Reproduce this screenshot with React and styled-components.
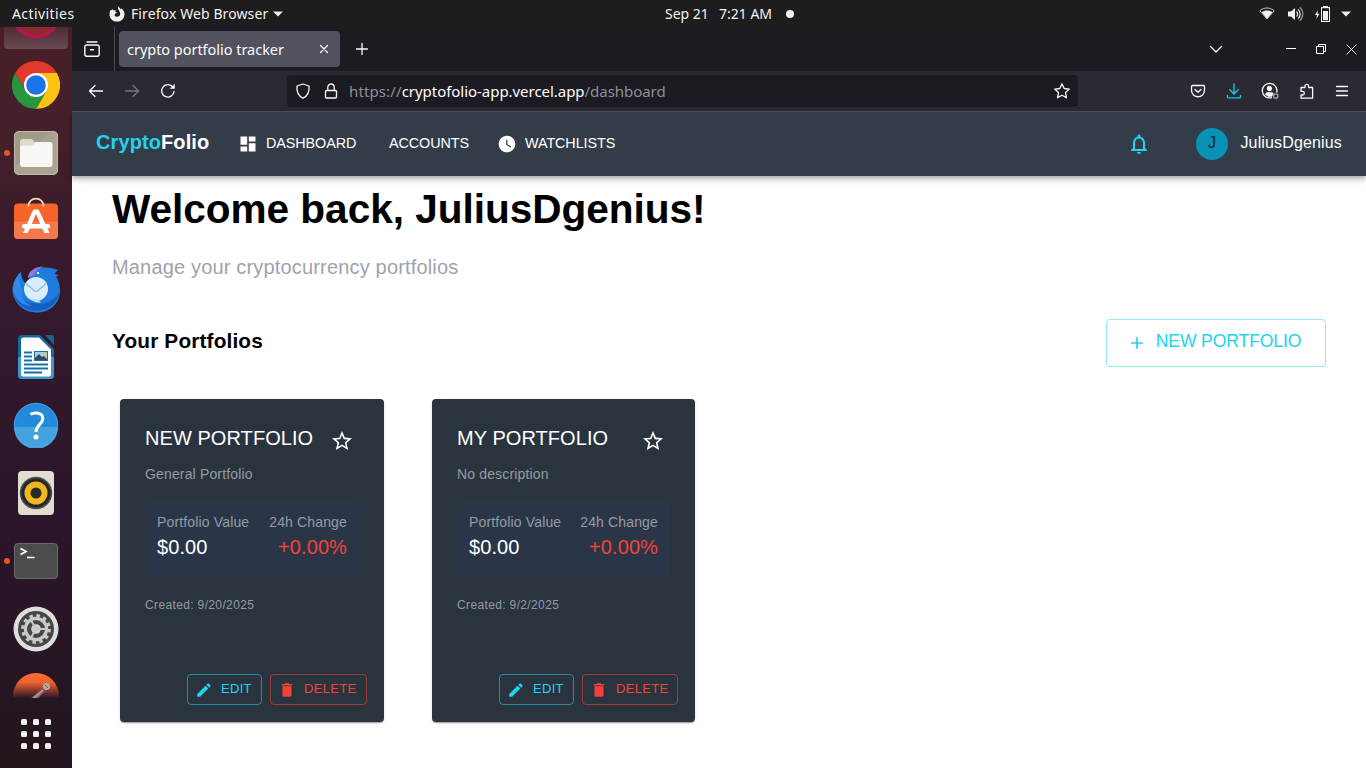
import React from "react";
import styled, { createGlobalStyle } from "styled-components";

const GlobalStyle = createGlobalStyle`
  * { box-sizing: border-box; }
  html, body { margin: 0; padding: 0; }
  body {
    width: 1366px;
    height: 768px;
    overflow: hidden;
    background: #fff;
    font-family: "Liberation Sans", Arial, sans-serif;
  }
  svg { display: block; flex: none; }
`;

const UI_FONT = `"Noto Sans", "Open Sans", sans-serif`;

/* ---------- desktop ---------- */

const Desktop = styled.div`
  display: flex;
  flex-direction: column;
  width: 1366px;
  height: 768px;
  overflow: hidden;
`;

const TopBar = styled.header`
  display: grid;
  grid-template-columns: 653px 1fr auto;
  align-items: center;
  flex: none;
  height: 27px;
  padding: 0 15px 0 12px;
  background: #1d1d1d;
  color: #f2f2f2;
  font: 14px/26px ${UI_FONT};
  white-space: pre;
`;

const TopGroup = styled.div`
  display: flex;
  align-items: center;
  height: 27px;
`;

const Activities = styled.span`
  width: 97px;
  letter-spacing: 0.42px;
`;

const AppName = styled.span`
  margin: 0 5px 0 6px;
  letter-spacing: 0.1px;
`;

const ClockPart = styled.span`
  width: ${(p) => p.$w}px;
`;

const Dot = styled.i`
  width: 8px;
  height: 8px;
  border-radius: 50%;
  background: #f2f2f2;
`;

const StatusIcons = styled.div`
  display: flex;
  align-items: center;
  gap: 11px;
  svg:first-child { margin-right: 2px; }
`;

const Workspace = styled.div`
  display: flex;
  flex: 1;
  min-height: 0;
`;

/* ---------- dock ---------- */

const Dock = styled.aside`
  display: flex;
  flex-direction: column;
  align-items: center;
  flex: none;
  width: 72px;
  background: linear-gradient(180deg, #491f26 0%, #43202a 16%, #3a1a2b 28%, #32182d 45%, #2a152a 70%, #261622 88%, #22151d 100%);
`;

const DockPartial = styled.div`
  display: flex;
  justify-content: center;
  width: 64px;
  height: 22px;
  margin: 0 0 2px;
  overflow: hidden;
  border-radius: 0 0 4px 4px;
  background: linear-gradient(180deg, #4c2b31, #6b4b54);
`;

const DockCell = styled.div`
  display: grid;
  grid-template-columns: 14px 44px 14px;
  align-items: center;
  justify-items: center;
  flex: none;
  width: 72px;
  height: 68px;
`;

const RunDot = styled.i`
  width: 6px;
  height: 6px;
  border-radius: 50%;
  background: ${(p) => (p.$on ? "#e95420" : "transparent")};
`;

const DockClip = styled.div`
  display: flex;
  justify-content: center;
  flex: none;
  height: 35px;
  padding-top: 10px;
  overflow: hidden;
`;

const AppsGrid = styled.div`
  display: grid;
  grid-template-columns: repeat(3, 6px);
  gap: 6px;
  margin-top: 21px;
  i { height: 6px; border-radius: 1.5px; background: #f3efee; }
`;

/* ---------- browser ---------- */

const Browser = styled.section`
  display: flex;
  flex-direction: column;
  flex: 1;
  min-width: 0;
`;

const TabStrip = styled.div`
  display: flex;
  align-items: center;
  flex: none;
  height: 44px;
  padding: 0 9px 0 10px;
  background: #1c1b22;
`;

const ViewButton = styled.div`
  display: flex;
  align-items: center;
  width: 33px;
  height: 44px;
  border-right: 1px solid #4c4b54;
`;

const Tab = styled.div`
  display: flex;
  align-items: center;
  justify-content: space-between;
  width: 221px;
  height: 36px;
  margin: 0 14px 0 4px;
  padding: 0 11px 0 8px;
  border-radius: 4px;
  background: #52525e;
  color: #fbfbfe;
  font: 14.5px/20px ${UI_FONT};
  white-space: nowrap;
`;

const TabTitle = styled.span`
  padding-bottom: 1px;
  letter-spacing: -0.03px;
`;

const WindowControls = styled.div`
  display: flex;
  align-items: center;
  margin-left: auto;
`;

const Gap = styled.span`
  width: ${(p) => p.$w}px;
`;

const Toolbar = styled.div`
  display: flex;
  align-items: center;
  flex: none;
  height: 41px;
  padding: 0 16px 0 16px;
  border-bottom: 1px solid #55545f;
  background: #2b2a33;
`;

const HistoryButtons = styled.div`
  display: flex;
  gap: 20px;
  width: 199px;
`;

const UrlField = styled.div`
  display: flex;
  align-items: center;
  width: 791px;
  height: 32px;
  padding: 0 8px;
  border-radius: 4px;
  background: #1c1b22;
  color: #8f8f98;
  font: 15px/20px ${UI_FONT};
`;

const UrlText = styled.span`
  flex: 1;
  margin-left: 10px;
  padding-bottom: 1px;
  white-space: nowrap;
  letter-spacing: -0.04px;
  b { color: #fbfbfe; font-weight: 400; }
`;

const UrlScheme = styled.span`
  letter-spacing: 0.12px;
`;

const ToolbarActions = styled.div`
  display: flex;
  align-items: center;
  gap: 19.5px;
  margin-left: auto;
`;

/* ---------- web app ---------- */

const NavBar = styled.nav`
  display: flex;
  align-items: center;
  flex: none;
  height: 64px;
  padding: 0 24px;
  background: #333d49;
  color: #fff;
  position: relative;
  box-shadow: 0 2px 4px -1px rgba(0, 0, 0, 0.2), 0 4px 5px rgba(0, 0, 0, 0.14), 0 1px 10px rgba(0, 0, 0, 0.12);
`;

const Brand = styled.span`
  width: 142px;
  padding-bottom: 4px;
  font-size: 20px;
  line-height: 30px;
  font-weight: 700;
  letter-spacing: 0.1px;
  color: #fff;
  em { font-style: normal; color: #22d3ee; }
`;

const NavLink = styled.a`
  display: flex;
  align-items: center;
  gap: 8px;
  width: ${(p) => p.$w}px;
  font-size: 14.4px;
  line-height: 20px;
  letter-spacing: -0.1px;
  white-space: nowrap;
  span { padding-bottom: 2px; }
`;

const Account = styled.div`
  display: flex;
  align-items: center;
  margin-left: auto;
`;

const Avatar = styled.span`
  width: 32px;
  height: 32px;
  margin: 0 12px 0 45px;
  padding-right: 1px;
  border-radius: 50%;
  background: #0891b2;
  color: #10252f;
  font-size: 16px;
  line-height: 30px;
  text-align: center;
`;

const UserName = styled.span`
  padding-bottom: 3px;
  font-size: 16px;
  line-height: 24px;
  letter-spacing: 0.15px;
`;

const Page = styled.main`
  flex: 1;
  min-height: 0;
  padding: 8px 40px 0;
  background: #fff;
  color: #000;
`;

const Heading = styled.h1`
  margin: 0;
  font-size: 40.6px;
  line-height: 50px;
  letter-spacing: -0.04px;
  white-space: nowrap;
`;

const Lead = styled.p`
  margin: 19px 0 0;
  font-size: 20px;
  line-height: 28px;
  letter-spacing: 0.17px;
  color: #9ca3af;
`;

const SectionBar = styled.div`
  display: flex;
  align-items: center;
  justify-content: space-between;
  height: 48px;
  margin-top: 38px;
`;

const SectionTitle = styled.h2`
  margin: 0;
  padding-bottom: 4px;
  font-size: 20.8px;
  line-height: 28px;
  letter-spacing: 0.15px;
`;

const CreateButton = styled.button`
  display: flex;
  align-items: center;
  justify-content: center;
  gap: 9px;
  width: 220px;
  height: 48px;
  padding: 0 4px 0 0;
  border: 1px solid rgba(34, 211, 238, 0.5);
  border-radius: 4px;
  background: transparent;
  color: #22d3ee;
  font: 17.6px/24px "Liberation Sans", Arial, sans-serif;
  letter-spacing: -0.13px;
  white-space: nowrap;
  span { padding-bottom: 4px; }
`;

const Cards = styled.div`
  display: flex;
  gap: 48px;
  margin: 32px 0 0 8px;
`;

const Card = styled.article`
  display: flex;
  flex-direction: column;
  width: ${(p) => p.$w}px;
  height: 323px;
  padding: 24px 17px 17px 25px;
  border-radius: 4px;
  background: #2a343f;
  box-shadow: 0 2px 1px -1px rgba(0, 0, 0, 0.2), 0 1px 1px rgba(0, 0, 0, 0.14), 0 1px 3px rgba(0, 0, 0, 0.12);
  color: #fff;
`;

const CardHead = styled.div`
  display: flex;
  justify-content: space-between;
  height: 41px;
  padding-right: 13px;
`;

const CardTitle = styled.h3`
  margin: 0;
  font-size: 20px;
  font-weight: 400;
  line-height: 30px;
  letter-spacing: 0.06px;
  white-space: nowrap;
`;

const StarSlot = styled.span`
  padding-top: 6px;
`;

const Muted = styled.p`
  margin: 0;
  font-size: ${(p) => p.$size || 14}px;
  line-height: 20px;
  letter-spacing: ${(p) => p.$track || 0.15}px;
  white-space: nowrap;
  color: #949ba5;
`;

const Stats = styled.div`
  display: flex;
  justify-content: space-between;
  height: 75px;
  margin: 18px 8px 18px 0;
  padding: 10px 12px;
  border-radius: 4px;
  background: #2a3647;
`;

const Stat = styled.div`
  text-align: ${(p) => p.$align || "left"};
`;

const StatValue = styled.div`
  font-size: 20px;
  line-height: 30px;
  letter-spacing: 0.1px;
  color: ${(p) => (p.$down ? "#f44336" : "#fff")};
`;

const CardActions = styled.div`
  display: flex;
  justify-content: flex-end;
  gap: 8px;
  margin-top: auto;
`;

const ActionButton = styled.button`
  display: flex;
  align-items: center;
  gap: 8px;
  width: ${(p) => p.$w}px;
  height: 31px;
  padding: 1px 0 0 7px;
  border: 1px solid ${(p) => (p.$danger ? "rgba(244,67,54,.55)" : "rgba(34,211,238,.55)")};
  border-radius: 4px;
  background: transparent;
  color: ${(p) => (p.$danger ? "#f44336" : "#22d3ee")};
  font: 13px/18px "Liberation Sans", Arial, sans-serif;
  letter-spacing: 0.3px;
  span { padding-bottom: 3px; }
`;

/* ---------- icons ---------- */

const Solid = ({ d, size = 24 }) => (
  <svg width={size} height={size} viewBox="0 0 24 24" fill="currentColor"><path d={d} /></svg>
);

const Line = ({ children, size = 16, color = "#fbfbfe", w = 1.3, box = 16 }) => (
  <svg width={size} height={size} viewBox={`0 0 ${box} ${box}`} fill="none" stroke={color} strokeWidth={w} strokeLinecap="round" strokeLinejoin="round">
    {children}
  </svg>
);

const PATHS = {
  dashboard: "M3 13h8V3H3v10zm0 8h8v-6H3v6zm10 0h8V11h-8v10zm0-18v6h8V3h-8z",
  watch: "M12 2C6.5 2 2 6.5 2 12s4.5 10 10 10 10-4.5 10-10S17.5 2 12 2zm4.2 14.2L11 13V7h1.5v5.2l4.5 2.7-.8 1.3z",
  bell: "M12 22c1.1 0 2-.9 2-2h-4c0 1.1.9 2 2 2zm6-6v-5c0-3.07-1.63-5.64-4.5-6.32V4c0-.83-.67-1.5-1.5-1.5s-1.5.67-1.5 1.5v.68C7.64 5.36 6 7.92 6 11v5l-2 2v1h16v-1l-2-2zm-2 1H8v-6c0-2.48 1.51-4.5 4-4.5s4 2.02 4 4.5v6z",
  star: "M22 9.24l-7.19-.62L12 2 9.19 8.63 2 9.24l5.46 4.73L5.82 21 12 17.27 18.18 21l-1.63-7.03L22 9.24zM12 15.4l-3.76 2.27 1-4.28-3.32-2.88 4.38-.38L12 6.1l1.71 4.04 4.38.38-3.32 2.88 1 4.28L12 15.4z",
  edit: "M3 17.25V21h3.75L17.81 9.94l-3.75-3.75L3 17.25zM20.71 7.04c.39-.39.39-1.02 0-1.41l-2.34-2.34a.9959.9959 0 0 0-1.41 0l-1.83 1.83 3.75 3.75 1.83-1.83z",
  trash: "M6 19c0 1.1.9 2 2 2h8c1.1 0 2-.9 2-2V7H6v12zM19 4h-3.5l-1-1h-5l-1 1H5v2h14V4z",
  add: "M19 13h-6v6h-2v-6H5v-2h6V5h2v6h6v2z",
};

const Caret = () => <svg width="10" height="6" viewBox="0 0 10 6"><path d="M0 .5h10L5 5.5z" fill="#f2f2f2" /></svg>;

const FirefoxMark = () => (
  <svg width="16" height="16" viewBox="0 0 16 16">
    <path d="M9 .3c1 1.2 2.2 2 2.6 3l.8-.8c2 1.600 3.300 3.600 3.100 6.200C15.300 12.800 12 15.600 8 15.600S.5 12.600.5 8.400C.5 6.200 1 4.500 2 3.400l.5 1.200 1-1.700.9 1.700c1-.5 1.800-.3 2.500 0-.4.500-.6 1-.6 1.400l1.700.5c-.3.800-1.600 1-2 1.400-.9.900-.3 2.900 1.900 2.900 2 0 3.300-1.400 3.300-3.100C11.200 5 8.300 4 9 .3z" fill="#f2f2f2" />
  </svg>
);

const Wifi = () => (
  <svg width="16" height="13" viewBox="0 0 16 13">
    <path d="M.8 3.700C4.800.100 11.200.100 15.200 3.700L8 12z" fill="none" stroke="#f2f2f2" strokeWidth="1" opacity=".75" />
    <path d="M2.600 5.300C5.600 3 10.400 3 13.400 5.300L8 11.800z" fill="#f2f2f2" />
  </svg>
);

const Volume = () => (
  <svg width="16" height="16" viewBox="0 0 16 16">
    <path d="M0 5.500h3L7 2v12l-4-3.500H0z" fill="#f2f2f2" />
    <g fill="none" stroke="#f2f2f2" strokeWidth="1.200">
      <path d="M8.500 5.500c1.300 1.400 1.300 3.600 0 5" />
      <path d="M10.200 3.300c2.600 2.700 2.600 6.700 0 9.400" />
      <path d="M11.800 1.200c4 3.800 4 9.800 0 13.600" opacity=".55" />
    </g>
  </svg>
);

const Battery = () => (
  <svg width="15" height="18" viewBox="0 0 15 18">
    <path d="M2.900 5L0 10h2l-.8 4L4.500 8.800H2.300z" fill="#f2f2f2" />
    <path d="M8 1h5v1h2v15H6V2h2z" fill="#f2f2f2" />
    <path d="M7 3.200h7v12.600H7z" fill="#1d1d1d" />
    <path d="M8 6h5v9H8z" fill="#f2f2f2" />
  </svg>
);

const Chrome = () => (
  <svg width="48" height="48" viewBox="0 0 48 48">
    <path d="M3.200 12A24 24 0 0 1 44.800 12H24L13.600 30z" fill="#e3382c" />
    <path d="M44.800 12A24 24 0 0 1 24 48L34.400 30 24 12z" fill="#fcc316" />
    <path d="M24 48A24 24 0 0 1 3.200 12L13.600 30H34.400z" fill="#27963f" />
    <circle cx="24" cy="24" r="12" fill="#fff" />
    <circle cx="24" cy="24" r="9.800" fill="#1a73e8" />
  </svg>
);

const Files = () => (
  <svg width="46" height="46" viewBox="0 0 46 46">
    <rect x="1" y="1" width="44" height="44" rx="5" fill="#a19a86" />
    <path d="M1 38L38 1h2a5 5 0 0 1 5 5v34a5 5 0 0 1-5 5H6a5 5 0 0 1-5-5z" fill="#aaa390" />
    <rect x="1.500" y="1.500" width="43" height="43" rx="4.500" fill="none" stroke="#c1bba9" />
    <path d="M7 12a3 3 0 0 1 3-3h9l3 3.500h12V20H7z" fill="#dedacb" />
    <path d="M7 17.500q0-2 2-2h10l4-3.500h14a2.500 2.500 0 0 1 2.500 2.500V34a3 3 0 0 1-3 3H10a3 3 0 0 1-3-3z" fill="#f8f7f5" />
  </svg>
);

const Software = () => (
  <svg width="46" height="50" viewBox="0 1.500 46 50">
    <rect x="1" y="9" width="44" height="35.500" rx="4" fill="#f4642b" />
    <path d="M1 27h44v13.500a4 4 0 0 1-4 4H5a4 4 0 0 1-4-4z" fill="#f6794b" />
    <path d="M15.500 12C15 1.500 31 1.500 30.500 12" fill="none" stroke="#f3ddb0" strokeWidth="1.800" />
    <path d="M20.500 15h5l3.500 7 4 9 3.500 7.500h-5l-3-6L23 19.500l-5.500 13-3 6h-4.500l3.500-7.500 3.500-9z" fill="#fff" />
    <rect x="9" y="29.500" width="28" height="4.500" rx="2.200" fill="#fff" />
  </svg>
);

const Thunderbird = () => (
  <svg width="48" height="48" viewBox="0 0 48 48">
    <path d="M9 7c-4 4-9 10-8.500 19C2 39 12 47.500 25 47.500c14 0 23-10 23-22 0-6-2-11-4-14l3-1-4.500-2 3.500-3.500c-10-4-24-4-28 7l-4 7c-2-2-5-7-5-12z" fill="#1f7bde" />
    <path d="M1 26c2 12 11 19.500 23 19.500 14 0 22-8 23-18-5 7-11 12-22 11C14 38 5 33 1 26z" fill="#155fc0" />
    <path d="M9 7c-2 6-2 12 1.500 19-1.500 8 2 12 9.500 15C8 41 1 31 1 23 2 16 5 10 9 7z" fill="#2f8be8" />
    <path d="M16 13c0-7 7-11.500 16-11.500-5 2-8 3.500-9.500 8z" fill="#9479dd" />
    <circle cx="24" cy="24" r="12" fill="#d9eefc" />
    <path d="M19 34c2 3 6 4 10 3.500L26 34z" fill="#b5e0fb" />
    <path d="M14 18.500l8 7q2 1.800 4 0l8-7" fill="none" stroke="#8fb4da" strokeWidth="1.200" />
    <circle cx="26" cy="8" r="1.200" fill="#e8f2fc" />
  </svg>
);

const Writer = () => (
  <svg width="38" height="46" viewBox="0 0 38 46">
    <path d="M1 5a4 4 0 0 1 4-4h18l14 14v26a4 4 0 0 1-4 4H5a4 4 0 0 1-4-4z" fill="#12699b" />
    <path d="M1 23h36v18a4 4 0 0 1-4 4H5a4 4 0 0 1-4-4z" fill="#3c9aca" />
    <path d="M28 1h6q3 0 3 3v7z" fill="#1c6591" />
    <path d="M4 6a2.500 2.500 0 0 1 2.500-2.500H22l12 12V40a2.500 2.500 0 0 1-2.500 2.500h-25A2.500 2.500 0 0 1 4 40z" fill="#fff" />
    <path d="M7 18.500h8M7 22.500h8M7 26.500h8M7 30.500h24M7 34.500h24M7 38.500h18" stroke="#1572a8" strokeWidth="2" />
    <path d="M17 17h14v10H17z" fill="#1a73a6" />
    <path d="M18 18h12v8H18z" fill="#a1d1ef" />
    <path d="M18 26v-2l4-4 3 3 2-1 3 3v1z" fill="#454545" />
    <path d="M27 18h3v3z" fill="#f3bd32" />
  </svg>
);

const Help = () => (
  <svg width="46" height="46" viewBox="0 0 46 46">
    <circle cx="23" cy="23" r="22" fill="#2389da" />
    <path d="M1 25a22 22 0 0 0 44 0z" fill="#46a2df" />
    <circle cx="23" cy="23" r="21.700" fill="none" stroke="#50a9e5" strokeWidth=".8" />
    <path d="M17.500 12.300c4-2.300 12.300-2 12.300 4.200 0 5.500-6.800 6.500-6.800 13.500" fill="none" stroke="#fff" strokeWidth="3" />
    <circle cx="23" cy="35" r="2.500" fill="#fff" />
  </svg>
);

const Speaker = () => (
  <svg width="38" height="46" viewBox="0 0 38 46">
    <rect x="1" y="1" width="36" height="44" rx="4" fill="#e2ddd0" />
    <circle cx="19" cy="23" r="16.200" fill="#4b4c52" />
    <circle cx="19" cy="23" r="14.500" fill="#26252a" />
    <circle cx="19" cy="23" r="11.500" fill="#edb91b" />
    <circle cx="19" cy="23" r="5.500" fill="#2b2926" />
  </svg>
);

const Terminal = () => (
  <svg width="46" height="38" viewBox="0 0 46 38">
    <rect x="1" y="1" width="44" height="36" rx="4" fill="#4b4b4b" />
    <rect x="1.500" y="1.500" width="43" height="35" rx="3.500" fill="none" stroke="#696969" />
    <path d="M7.500 6.500l5.500 3-5.500 3" fill="none" stroke="#fff" strokeWidth="1.800" />
    <path d="M14 15.500h7.500" stroke="#fff" strokeWidth="1.600" />
  </svg>
);

const Settings = () => (
  <svg width="46" height="46" viewBox="0 0 46 46">
    <circle cx="23" cy="23" r="22.500" fill="#dededc" />
    <circle cx="23" cy="23" r="18" fill="#464646" />
    <circle cx="23" cy="23" r="13.200" fill="none" stroke="#c9c9c9" strokeWidth="3.400" strokeDasharray="3.450 3.460" />
    <circle cx="23" cy="23" r="10.600" fill="none" stroke="#c9c9c9" strokeWidth="3.200" />
    <circle cx="23" cy="23" r="4.800" fill="#d4d4d4" />
    <path d="M23 23h10M23 23l-5-8.700M23 23l-5 8.700" stroke="#c9c9c9" strokeWidth="2" />
  </svg>
);

const Postman = () => (
  <svg width="46" height="46" viewBox="0 0 46 46">
    <defs>
      <linearGradient id="fade" x1="0" y1="0" x2="0" y2="1">
        <stop offset="0" stopColor="#ff6c37" />
        <stop offset=".2" stopColor="#f0622f" />
        <stop offset=".54" stopColor="#2d1727" />
      </linearGradient>
    </defs>
    <circle cx="23" cy="23" r="23" fill="url(#fade)" />
    <path d="M17 26l12-10 3 2-8 8z" fill="#8a716f" />
    <path d="M21 25l9-8" stroke="#cdbcb8" strokeWidth="1" />
    <circle cx="33.500" cy="13.500" r="3.600" fill="#bda79f" />
    <path d="M32 12l3 3" stroke="#6d4a45" />
  </svg>
);

const LastApp = () => (
  <svg width="44" height="20" viewBox="0 0 44 20">
    <ellipse cx="22" cy="-7" rx="22" ry="18.500" fill="#b3154f" />
    <ellipse cx="22" cy="-9" rx="19" ry="17" fill="#8f2830" />
  </svg>
);

/* ---------- data ---------- */

const dockApps = [
  { Icon: Chrome },
  { Icon: Files, running: true },
  { Icon: Software },
  { Icon: Thunderbird },
  { Icon: Writer },
  { Icon: Help },
  { Icon: Speaker },
  { Icon: Terminal, running: true },
  { Icon: Settings },
];

const portfolios = [
  { name: "NEW PORTFOLIO", note: "General Portfolio", created: "9/20/2025", width: 264, del: 97 },
  { name: "MY PORTFOLIO", note: "No description", created: "9/2/2025", width: 263, del: 96 },
];

function PortfolioCard({ item }) {
  return (
    <Card $w={item.width}>
      <CardHead>
        <CardTitle>{item.name}</CardTitle>
        <StarSlot><Solid d={PATHS.star} size={24} /></StarSlot>
      </CardHead>
      <Muted>{item.note}</Muted>
      <Stats>
        <Stat>
          <Muted>Portfolio Value</Muted>
          <StatValue>$0.00</StatValue>
        </Stat>
        <Stat $align="right">
          <Muted>24h Change</Muted>
          <StatValue $down>+0.00%</StatValue>
        </Stat>
      </Stats>
      <Muted $size={12} $track={0.36}>Created: {item.created}</Muted>
      <CardActions>
        <ActionButton $w={75}><Solid d={PATHS.edit} size={18} /><span>EDIT</span></ActionButton>
        <ActionButton $w={item.del} $danger><Solid d={PATHS.trash} size={18} /><span>DELETE</span></ActionButton>
      </CardActions>
    </Card>
  );
}

export default function App() {
  return (
    <Desktop>
      <GlobalStyle />
      <TopBar>
        <TopGroup>
          <Activities>Activities</Activities>
          <FirefoxMark />
          <AppName>Firefox Web Browser</AppName>
          <Caret />
        </TopGroup>
        <TopGroup>
          <ClockPart $w={54}>Sep 21</ClockPart>
          <ClockPart $w={67}>7:21 AM</ClockPart>
          <Dot />
        </TopGroup>
        <StatusIcons>
          <Wifi /><Volume /><Battery /><Caret />
        </StatusIcons>
      </TopBar>
      <Workspace>
        <Dock>
          <DockPartial><LastApp /></DockPartial>
          {dockApps.map(({ Icon, running }, i) => (
            <DockCell key={i}><RunDot $on={running} /><Icon /></DockCell>
          ))}
          <DockClip><Postman /></DockClip>
          <AppsGrid>{Array.from({ length: 9 }, (_, i) => <i key={i} />)}</AppsGrid>
        </Dock>
        <Browser>
          <TabStrip>
            <ViewButton>
              <Line size={20} box={20}><path d="M5 3h10M4.800 6h10.400a2 2 0 0 1 2 2v7.300a2 2 0 0 1-2 2H4.800a2 2 0 0 1-2-2V8a2 2 0 0 1 2-2zM8.500 10.700h3" strokeWidth="1.400" /></Line>
            </ViewButton>
            <Tab>
              <TabTitle>crypto portfolio tracker</TabTitle>
              <Line size={10} box={10}><path d="M1.500 1.500l7 7M8.500 1.500l-7 7" /></Line>
            </Tab>
            <Line><path d="M8 2.500v11M2.500 8h11" /></Line>
            <WindowControls>
              <Line size={14} box={14}><path d="M1.500 4.500L7 10l5.500-5.500" /></Line>
              <Gap $w={63} />
              <svg width="10" height="10" viewBox="0 0 10 10"><path d="M0 4h10v1H0z" fill="#fff" /></svg>
              <Gap $w={20} />
              <svg width="10" height="10" viewBox="0 0 10 10" fill="none" stroke="#fff"><path d="M.5 2.500h7v7h-7zM2.500 2.500v-2h7v7h-2" /></svg>
              <Gap $w={20} />
              <svg width="11" height="11" viewBox="0 0 11 11" stroke="#fff" strokeWidth=".9"><path d="M.5.500l10 10M10.500.500l-10 10" /></svg>
            </WindowControls>
          </TabStrip>
          <Toolbar>
            <HistoryButtons>
              <Line><path d="M14.500 8h-13M7 2.500L1.500 8 7 13.500" /></Line>
              <Line color="#77767e"><path d="M1.500 8h13M9 2.500L14.500 8 9 13.500" /></Line>
              <Line><path d="M14 8.500A6.200 6.200 0 1 1 12.500 3.800" /><path d="M10.500 5.500H14.500V1.500z" fill="#fbfbfe" strokeWidth=".5" /></Line>
            </HistoryButtons>
            <UrlField>
              <Line><path d="M8 1L14 3c.5 5-1.500 10-6 12.200C3.500 13 1.500 8 2 3z" /></Line>
              <Gap $w={12} />
              <Line><path d="M3.500 7.500h9q1 0 1 1v5.500q0 1-1 1h-9q-1 0-1-1V8.500q0-1 1-1zM4.800 7.500V4.200a3.200 3.200 0 0 1 6.400 0V7.500" /></Line>
              <UrlText><UrlScheme>https://</UrlScheme><b>cryptofolio-app.vercel.app</b>/dashboard</UrlText>
              <Line><path d="M8 .8l2.200 4.700 5.100.6-3.800 3.500 1 5.200L8 12.200l-4.500 2.600 1-5.200L.7 6.100l5.100-.6z" strokeWidth="1.300" /></Line>
            </UrlField>
            <ToolbarActions>
              <Line><path d="M2.500 2.500h11q1 0 1 1V7c0 9-13 9-13 0V3.500q0-1 1-1zM5 6.500l3 2.800 3-2.800" /></Line>
              <Line color="#19c6e0"><path d="M8 1v9.500M3.800 6.800L8 11l4.200-4.200M1.500 12.500v1.200q0 1.200 1.200 1.200h10.600q1.200 0 1.200-1.200v-1.200" strokeWidth="1.400" /></Line>
              <Line size={18} box={18}>
                <path d="M10.500 15.700A7.300 7.300 0 1 1 15.800 10" />
                <circle cx="8.500" cy="6.500" r="2" fill="#fbfbfe" />
                <path d="M4.500 12.500q0-2 2-2h4q2 0 2 1.500l-2 2.500h-3z" fill="#fbfbfe" strokeWidth=".5" />
                <circle cx="14.800" cy="14" r="2.200" stroke="#a3a2aa" />
              </Line>
              <Line><path d="M2 4.500h4V3.200a1.800 1.800 0 0 1 3.600 0v1.300h4v10.700H2V12h1.500a1.800 1.800 0 0 0 0-3.600H2z" /></Line>
              <Line><path d="M2.500 3.500h11M2.500 8h11M2.500 12.500h11" /></Line>
            </ToolbarActions>
          </Toolbar>
          <NavBar>
            <Brand><em>Crypto</em>Folio</Brand>
            <NavLink $w={151}><Solid d={PATHS.dashboard} size={20} /><span>DASHBOARD</span></NavLink>
            <NavLink $w={108}><span>ACCOUNTS</span></NavLink>
            <NavLink $w={120}><Solid d={PATHS.watch} size={20} /><span>WATCHLISTS</span></NavLink>
            <Account>
              <svg width="24" height="24" viewBox="0 0 24 24" fill="#22d3ee"><path d={PATHS.bell} /></svg>
              <Avatar>J</Avatar>
              <UserName>JuliusDgenius</UserName>
            </Account>
          </NavBar>
          <Page>
            <Heading>Welcome back, JuliusDgenius!</Heading>
            <Lead>Manage your cryptocurrency portfolios</Lead>
            <SectionBar>
              <SectionTitle>Your Portfolios</SectionTitle>
              <CreateButton><Solid d={PATHS.add} size={20} /><span>NEW PORTFOLIO</span></CreateButton>
            </SectionBar>
            <Cards>
              {portfolios.map((p) => <PortfolioCard key={p.name} item={p} />)}
            </Cards>
          </Page>
        </Browser>
      </Workspace>
    </Desktop>
  );
}
